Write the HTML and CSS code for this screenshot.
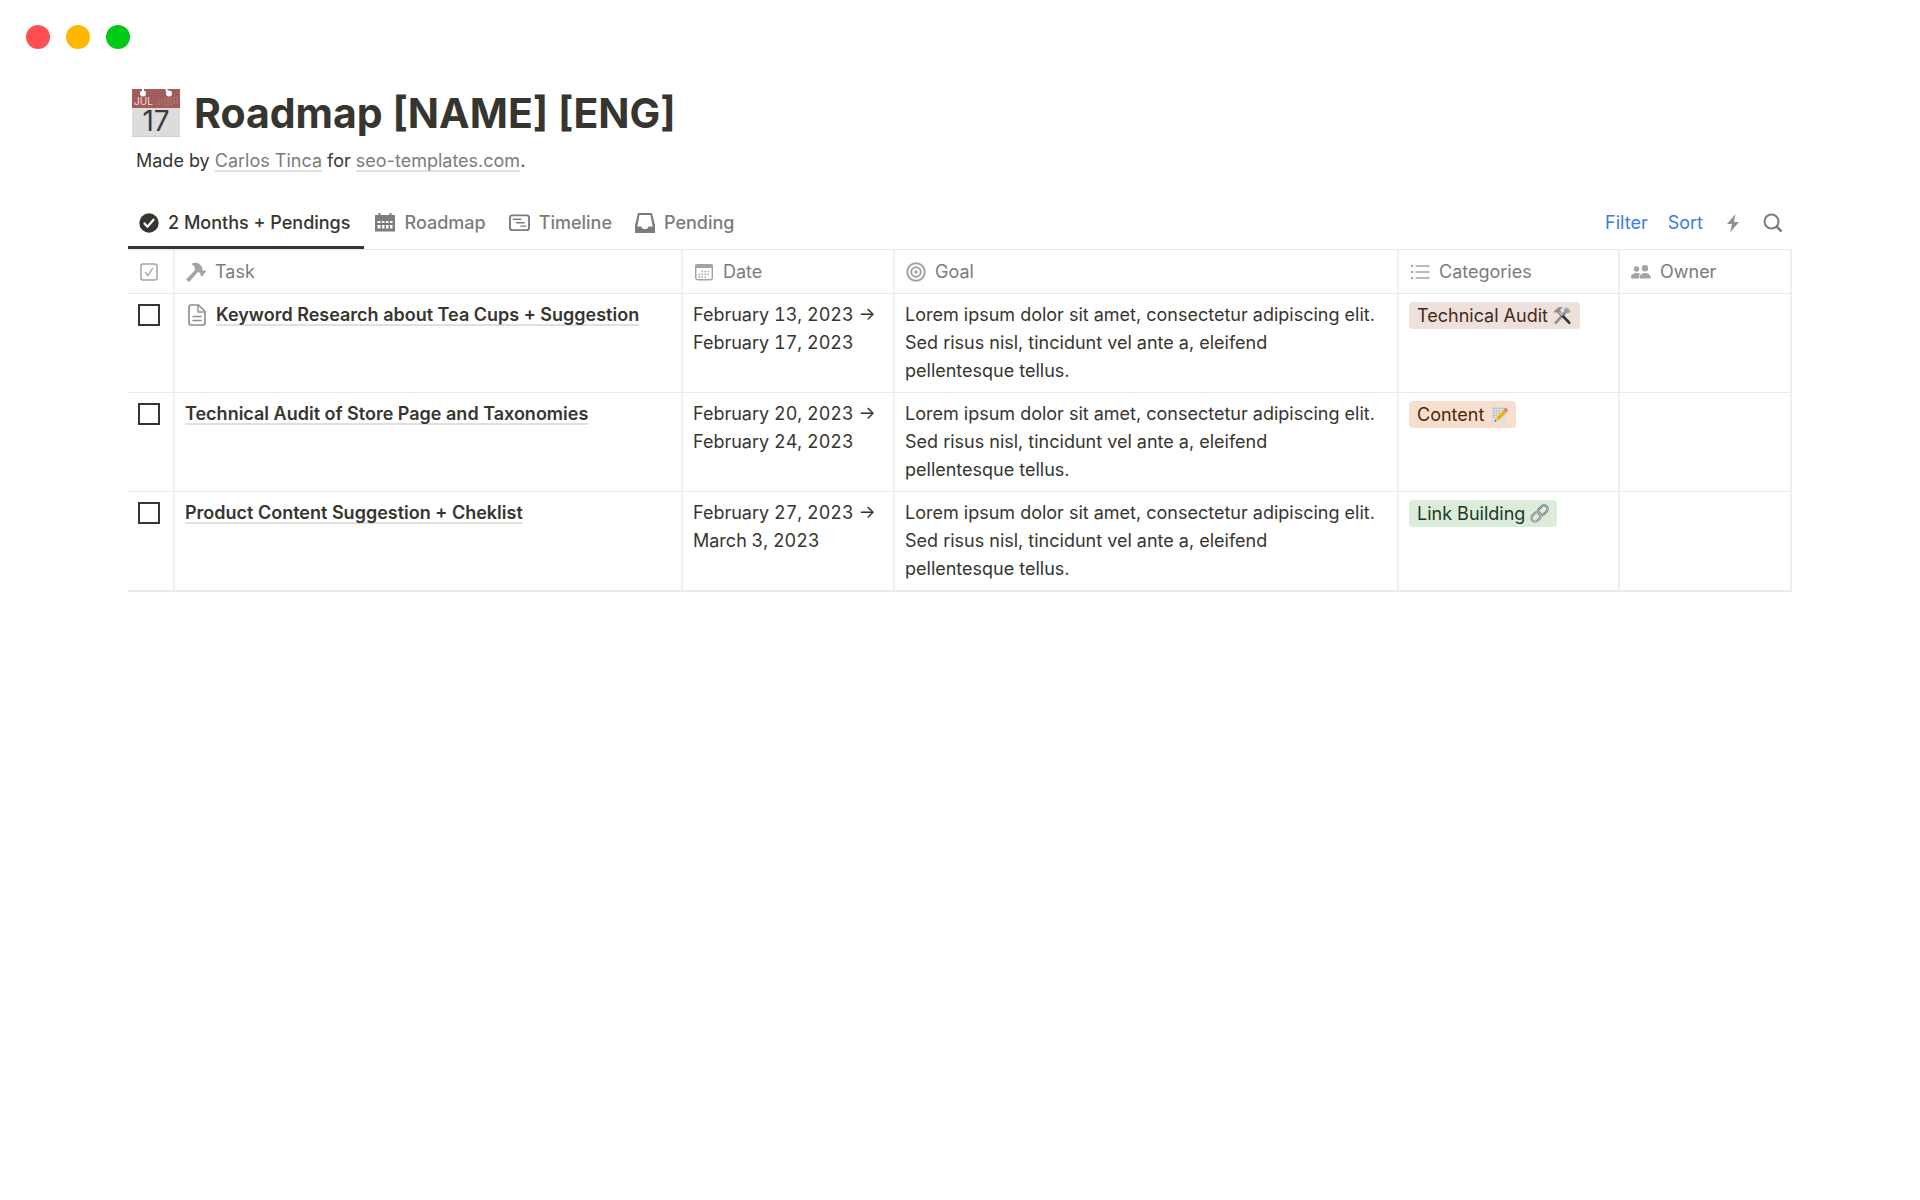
FILE: index.html
```
<!DOCTYPE html>
<html lang="en">
<head>
<meta charset="utf-8">
<meta name="viewport" content="width=device-width, initial-scale=1">
<title>Roadmap [NAME] [ENG]</title>
<link rel="stylesheet" href="styles.css">
</head>
<body>
<div class="window-bar">
  <span class="dot dot-red"></span>
  <span class="dot dot-yellow"></span>
  <span class="dot dot-green"></span>
</div>

<main class="page">
  <header class="page-header">
    <div class="title-row">
      <svg class="page-icon" viewBox="0 0 48 48" aria-hidden="true">
        <rect width="48" height="48" fill="#dcdcdc"/>
        <rect width="48" height="19" fill="#a15c5c"/>
        <rect y="47" width="48" height="1" fill="#cfcfcf"/>
        <path d="M11 0v4M34 0l2 4" stroke="#fff" stroke-width="2"/>
        <circle cx="11" cy="4.500" r="3" fill="#fff"/>
        <circle cx="37" cy="4.500" r="3" fill="#fff"/>
        <path d="M27 11v5M30 10v6M33 9v7M36 9v7M39 9v7M42 8v7M45 8v7" stroke="#bd8b8b" stroke-dasharray="1 1"/>
        <text x="2" y="16" font-size="10" fill="#f1dede">JUL</text>
        <text x="24" y="42" font-size="28" text-anchor="middle" fill="#3b3b3b">17</text>
      </svg>
      <h1>Roadmap [NAME] [ENG]</h1>
    </div>
    <p class="byline">Made by <a href="#">Carlos Tinca</a> for <a href="#">seo-templates.com</a>.</p>
  </header>

  <div class="toolbar">
    <nav class="tabs" aria-label="Views">
      <button class="tab tab-active" type="button">
        <svg class="icon" viewBox="0 0 20 20"><circle cx="10" cy="10" r="9.700" fill="currentColor"/><path d="M5.500 10.500l3 3.200 6-7" fill="none" stroke="#fff" stroke-width="2.200" stroke-linecap="round" stroke-linejoin="round"/></svg>
        2 Months + Pendings
      </button>
      <button class="tab" type="button">
        <svg class="icon" viewBox="0 0 20 20"><path fill="currentColor" fill-rule="evenodd" d="M3.500 0h2v2h9V0h2v2H20v16.500H0V2h3.500zM2.500 8v2h3V8zM7 8v2h2.500V8zM11 8v2h2.500V8zM15 8v2h2.500V8zM2.500 12v3.500h3V12zM7 12v3.500h2.500V12zM11 12v3.500h2.500V12zM15 12v3.500h2.500V12z"/></svg>
        Roadmap
      </button>
      <button class="tab" type="button">
        <svg class="icon icon-wide" viewBox="0 0 22 20"><g fill="none" stroke="currentColor" stroke-linecap="round"><rect x="1" y="2" width="20" height="15.500" rx="2.500" stroke-width="2"/><path d="M4.500 6h8M8 9.700h8M12.500 13.300h5" stroke-width="1.500"/></g></svg>
        Timeline
      </button>
      <button class="tab" type="button">
        <svg class="icon" viewBox="0 0 20 20"><path fill="currentColor" fill-rule="evenodd" d="M3 0h14l3 12v8H0v-8zM4.500 2L2.300 13.500H6c1 0 1 2.500 2.500 2.500h3c1.500 0 1.500-2.500 2.500-2.500h3.700L15.500 2z"/></svg>
        Pending
      </button>
    </nav>
    <div class="actions">
      <button class="action" type="button">Filter</button>
      <button class="action" type="button">Sort</button>
      <button class="action action-icon" type="button" aria-label="Automations">
        <svg class="icon" viewBox="0 0 20 20"><path fill="#91918e" d="M12.500 1L4 11h5l-2 8.500L16 9h-5z"/></svg>
      </button>
      <button class="action action-icon" type="button" aria-label="Search">
        <svg class="icon" viewBox="0 0 20 20"><g fill="none" stroke="currentColor" stroke-width="2"><circle cx="8.500" cy="8.500" r="7"/><path d="M13.500 13.500l5 5" stroke-width="2.600"/></g></svg>
      </button>
    </div>
  </div>

  <table class="board">
    <colgroup>
      <col class="col-done"><col class="col-task"><col class="col-date"><col class="col-goal"><col class="col-cat"><col class="col-owner">
    </colgroup>
    <thead>
      <tr>
        <th class="center" aria-label="Done">
          <svg class="icon" viewBox="0 0 20 20"><g fill="none" stroke="currentColor" stroke-linecap="round" stroke-linejoin="round"><rect x="2" y="2" width="16" height="16" rx="2" stroke-width="1.500"/><path d="M6.500 10.500l2.500 3 4.500-7" stroke-width="1.300"/></g></svg>
        </th>
        <th><span class="head">
          <svg class="icon" viewBox="0 0 20 20"><path fill="currentColor" d="M6 1.500C9 0 12 .5 14 2.500l2 2.500c.5 1 .3 2 .3 3l1.200.8 1-.8 1.500 1.500-4 5-1.700-1.500.5-1.200-2.600-2L3 20l-3-2.500 8.500-8.700C9.500 7 9 4 6 2.500z"/></svg>
          Task</span></th>
        <th><span class="head">
          <svg class="icon" viewBox="0 0 20 20"><rect x="1.700" y="2.700" width="16.600" height="15" rx="2" fill="none" stroke="currentColor" stroke-width="1.400"/><path fill="currentColor" d="M1 6V4q0-2 2-2h14q2 0 2 2v2z"/><path d="M7.500 9.500h8M4.500 12.200h11M4.500 15h8" stroke="currentColor" stroke-width="1.400" stroke-dasharray="1.400 1.600"/></svg>
          Date</span></th>
        <th><span class="head">
          <svg class="icon" viewBox="0 0 20 20"><g fill="none" stroke="currentColor" stroke-width="2"><circle cx="10" cy="10" r="8.800"/><circle cx="10" cy="10" r="4.800"/></g><circle cx="10" cy="10" r="1.800" fill="currentColor"/></svg>
          Goal</span></th>
        <th><span class="head">
          <svg class="icon" viewBox="0 0 20 20"><g fill="currentColor"><circle cx="2" cy="4" r="1.200"/><circle cx="2" cy="10" r="1.200"/><circle cx="2" cy="16" r="1.200"/></g><path d="M6 4h13M6 10h13M6 16h13" stroke="currentColor" stroke-width="1.400" stroke-linecap="round"/></svg>
          Categories</span></th>
        <th><span class="head">
          <svg class="icon" viewBox="0 0 20 20"><g fill="currentColor"><circle cx="5.500" cy="7" r="2.700"/><circle cx="14" cy="6.300" r="3.200"/><path d="M8 16.500c-.3-2 .3-3.600 1.300-4.700C5 9.700 0 12 0 15.200q0 1.300 1.200 1.300zM9.500 16.500q-1.200 0-1-1.500c1-5.500 10-5.500 11.300 0q.3 1.500-1 1.500z"/></g></svg>
          Owner</span></th>
      </tr>
    </thead>
    <tbody>
      <tr>
        <td class="center"><input class="check" type="checkbox" aria-label="Keyword Research about Tea Cups + Suggestion done"></td>
        <td><span class="task">
          <svg class="doc-icon" viewBox="0 0 20 24"><g fill="none" stroke="currentColor" stroke-width="1.700" stroke-linejoin="round" stroke-linecap="round"><path d="M4 2h7.500L18 8.500V20q0 2-2 2H4q-2 0-2-2V4q0-2 2-2z"/><path d="M11 2.500V9h6.500M6 13.500h8M6 17.500h8" stroke-width="1.500"/></g></svg>
          <a href="#">Keyword Research about Tea Cups + Suggestion</a></span></td>
        <td class="date">February 13, 2023 → February 17, 2023</td>
        <td class="goal">Lorem ipsum dolor sit amet, consectetur adipiscing elit. Sed risus nisl, tincidunt vel ante a, eleifend pellentesque tellus.</td>
        <td><span class="tag tag-brown">Technical Audit
          <svg class="emoji" viewBox="0 0 20 20"><path d="M15.500 4L3 17.500" stroke="#8d929c" stroke-width="3" stroke-linecap="round"/><path d="M13 1.500c-2 2-1 4.500 1 5.500s5 0 5-2.500l-2.500 1-2-2z" fill="#9a9ea8"/><path d="M5.500 5.500L17 17.500" stroke="#34363d" stroke-width="3" stroke-linecap="round"/><path d="M5 5l5 5" stroke="#c4c6cc" stroke-width="2"/><path d="M1 5.500L5.500 1.500q3-1 5 .5L8 3l-.5 3L5 8 3.500 6 2 7.500z" fill="#8a8e98"/></svg></span></td>
        <td></td>
      </tr>
      <tr>
        <td class="center"><input class="check" type="checkbox" aria-label="Technical Audit of Store Page and Taxonomies done"></td>
        <td><span class="task"><a href="#">Technical Audit of Store Page and Taxonomies</a></span></td>
        <td class="date">February 20, 2023 → February 24, 2023</td>
        <td class="goal">Lorem ipsum dolor sit amet, consectetur adipiscing elit. Sed risus nisl, tincidunt vel ante a, eleifend pellentesque tellus.</td>
        <td><span class="tag tag-orange">Content
          <svg class="emoji" viewBox="0 0 20 20"><rect x="2" y="1" width="16" height="18" fill="#dfe0e0"/><path d="M4 3.500h11M4 6h9M4 8.500h7M4 11h4M4 13.500h2" stroke="#a9abae" stroke-dasharray="2 1"/><path d="M6.500 17l1-4L15 5l3.500 3-8 8z" fill="#f4bd25"/><path d="M9 15l8.500-8" stroke="#d18b16" stroke-width="1"/><path d="M15 5l2-2q2.500.5 3 3l-1.500 2z" fill="#dd7c87"/><path d="M6.500 17l1-4 3 3z" fill="#e8caa0"/><path d="M6 17.500l.5-2 1.500 1.300z" fill="#333"/></svg></span></td>
        <td></td>
      </tr>
      <tr>
        <td class="center"><input class="check" type="checkbox" aria-label="Product Content Suggestion + Cheklist done"></td>
        <td><span class="task"><a href="#">Product Content Suggestion + Cheklist</a></span></td>
        <td class="date">February 27, 2023 → March 3, 2023</td>
        <td class="goal">Lorem ipsum dolor sit amet, consectetur adipiscing elit. Sed risus nisl, tincidunt vel ante a, eleifend pellentesque tellus.</td>
        <td><span class="tag tag-green">Link Building
          <svg class="emoji" viewBox="0 0 20 20"><g fill="none" stroke-width="2.400"><rect x="-5.500" y="-3.700" width="11" height="7.400" rx="3.700" transform="translate(6.500 13.500) rotate(-45)" stroke="#85868e"/><rect x="-5.500" y="-3.700" width="11" height="7.400" rx="3.700" transform="translate(13.500 6.500) rotate(-45)" stroke="#777881"/><rect x="-5.500" y="-3.700" width="11" height="7.400" rx="3.700" transform="translate(6.500 13.500) rotate(-45)" stroke="#cacbd0" stroke-width=".8"/><rect x="-5.500" y="-3.700" width="11" height="7.400" rx="3.700" transform="translate(13.500 6.500) rotate(-45)" stroke="#c3c4ca" stroke-width=".8"/></g></svg></span></td>
        <td></td>
      </tr>
    </tbody>
  </table>
</main>
</body>
</html>
```
FILE: styles.css
```
:root {
  --ink: #37352f;
  --muted: #7d7c78;
  --faint: #a5a4a1;
  --line: #e9e9e7;
  --blue: #3b7de0;
}

* { box-sizing: border-box; }

body {
  margin: 0;
  background: #fff;
  color: var(--ink);
  font-family: Inter, "Liberation Sans", sans-serif;
  font-size: 18px;
  line-height: 28px;
}

button {
  padding: 0;
  border: 0;
  background: none;
  color: inherit;
  font: inherit;
  cursor: pointer;
}

svg { display: block; flex: none; }

.window-bar {
  display: flex;
  gap: 16px;
  padding: 25px 26px 0;
}

.dot { width: 24px; height: 24px; border-radius: 50%; }
.dot-red { background: #ff4f52; }
.dot-yellow { background: #ffb700; }
.dot-green { background: #00ca18; }

.page { padding: 37px 128px 0; }

.title-row {
  display: flex;
  align-items: center;
  gap: 14px;
  padding-left: 4px;
}

.page-icon { width: 48px; height: 48px; overflow: visible; line-height: 1; }

h1 {
  margin: 0;
  font-size: 41px;
  line-height: 54px;
  font-weight: 700;
}

.byline { margin: 7px 0 0; padding-left: 8px; }

.byline a,
.task a {
  text-decoration: underline;
  text-decoration-color: #e0e0de;
  text-decoration-thickness: 2px;
  text-underline-offset: 3px;
  text-decoration-skip-ink: none;
}

.byline a { color: var(--muted); }

.toolbar {
  display: flex;
  justify-content: space-between;
  margin-top: 24px;
  border-bottom: 1px solid var(--line);
}

.tabs { display: flex; }

.tab {
  display: flex;
  align-items: center;
  gap: 9px;
  padding: 10px 12px 9px 11px;
  border-bottom: 3px solid transparent;
  color: var(--muted);
  font-weight: 500;
}

.tab-active {
  padding-right: 14px;
  border-color: var(--ink);
  color: var(--ink);
}

.icon { width: 20px; height: 20px; }
.icon-wide { width: 21px; }

.actions {
  display: flex;
  align-items: center;
  gap: 20px;
  padding: 0 9px 3px 0;
}

.action { color: var(--blue); }
.action-icon { color: var(--muted); }

.board {
  width: 100%;
  border-collapse: separate;
  border-spacing: 0;
  border-bottom: 1px solid var(--line);
  table-layout: fixed;
}

.col-done { width: 47px; }
.col-task { width: 508px; }
.col-date { width: 212px; }
.col-cat { width: 221px; }
.col-owner { width: 172px; }

th,
td {
  padding: 7px 10px;
  border-right: 2px solid #eeeeec;
  border-bottom: 1px solid var(--line);
  text-align: left;
  vertical-align: top;
}

th {
  padding: 8px 11px 7px;
  color: var(--muted);
  font-weight: 400;
  vertical-align: middle;
}

th .icon { color: var(--faint); }

.head { display: flex; align-items: center; gap: 9px; }

.date { font-variant-numeric: tabular-nums; }
.goal { padding-right: 18px; }

td.center { line-height: 0; }

.check {
  appearance: none;
  width: 22px;
  height: 22px;
  margin: 3px 0 0;
  border: 2px solid var(--ink);
  background: #fff;
}

.task { display: flex; align-items: center; gap: 9px; }
.task a { color: inherit; font-weight: 600; }

.doc-icon { width: 20px; height: 24px; margin-left: 2px; color: #91918e; }

.tag {
  display: inline-flex;
  align-items: center;
  gap: 5px;
  height: 27px;
  margin-top: 1px;
  padding: 0 8px;
  border-radius: 4px;
  vertical-align: top;
}

.emoji { width: 19px; height: 19px; }

.tag-brown { background: #eee0da; color: #442a1e; }
.tag-orange { background: #f7dfce; color: #49290e; }
.tag-green { background: #dcecdb; color: #1c3829; }
```
